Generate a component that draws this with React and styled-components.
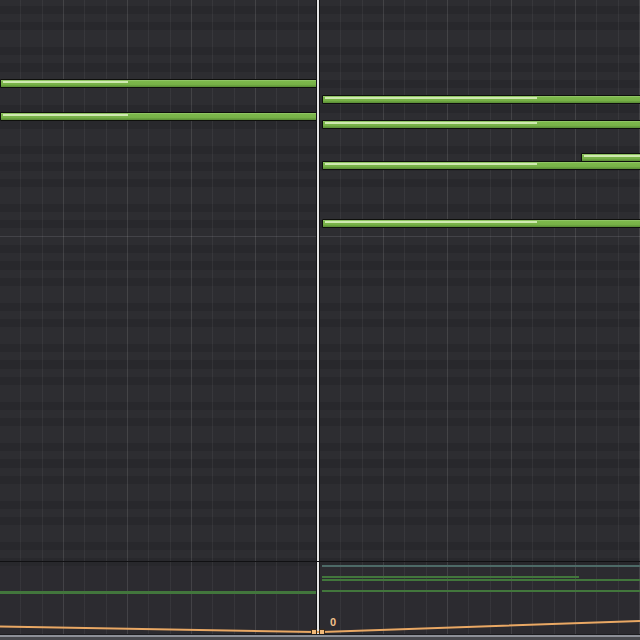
import React from 'react'
import styled, { createGlobalStyle } from 'styled-components'

const ROW_H = 8.25
const ROW_OFFSET = 5.5
const PLAYHEAD_X = 317
const MARKER_ROW = 27

const GlobalStyle = createGlobalStyle`
  html, body {
    margin: 0;
    padding: 0;
    background: #2a2a2e;
    overflow: hidden;
  }
  body {
    font-family: "Liberation Sans", Arial, sans-serif;
  }
`

const BLACK_KEYS = [0, 2, 5, 7, 9]

const notes = [
  { row: 9, x: 0, w: 318, vel: 128 },
  { row: 13, x: 0, w: 318, vel: 128 },
  { row: 11, x: 322, w: 330, vel: 215 },
  { row: 14, x: 322, w: 330, vel: 215 },
  { row: 19, x: 322, w: 330, vel: 215 },
  { row: 26, x: 322, w: 330, vel: 215 },
  { row: 18, x: 581, w: 70, vel: 59 },
]

const velocityLines = [
  { x: 0, w: 316, y: 29, h: 3, tone: 'green' },
  { x: 322, w: 318, y: 3, h: 2, tone: 'grey' },
  { x: 322, w: 257, y: 14, h: 2, tone: 'green' },
  { x: 322, w: 318, y: 17, h: 2, tone: 'green' },
  { x: 322, w: 318, y: 28, h: 2, tone: 'green' },
]

export default function App() {
  const rows = []
  for (let k = -1; k < 68; k++) {
    const m = ((k % 12) + 12) % 12
    rows.push({ k, black: BLACK_KEYS.includes(m), marker: k === MARKER_ROW })
  }

  return (
    <Editor>
      <GlobalStyle />
      <Roll>
        <KeyRows>
          {rows.map(r => (
            <KeyRow key={r.k} $black={r.black} $marker={r.marker} />
          ))}
        </KeyRows>
        <GridLines />
        {notes.map((n, i) => (
          <Note
            key={i}
            style={{ left: n.x, top: Math.round(ROW_OFFSET + n.row * ROW_H - 1), width: n.w }}
          >
            <VelocityMark style={{ width: n.vel - 3 }} />
          </Note>
        ))}
        <Playhead />
      </Roll>
      <Divider />
      <Lane>
        <GridLines />
        {velocityLines.map((v, i) => (
          <VelLine
            key={i}
            $tone={v.tone}
            style={{ left: v.x, top: v.y, width: v.w, height: v.h }}
          />
        ))}
        <Automation width="640" height="72" viewBox="0 0 640 72">
          <polyline
            points="0,64.5 314,70 322,70 640,59"
            fill="none"
            stroke="#e9a864"
            strokeWidth="2"
          />
          <rect x="311.5" y="67.5" width="5" height="5" fill="#f0b878" stroke="#3a2a1a" strokeWidth="1" />
          <rect x="319.5" y="67.5" width="5" height="5" fill="#f0b878" stroke="#3a2a1a" strokeWidth="1" />
        </Automation>
        <ValueLabel>0</ValueLabel>
        <Playhead />
      </Lane>
      <StatusStrip />
    </Editor>
  )
}

const Editor = styled.div`
  width: 640px;
  height: 640px;
  display: flex;
  flex-direction: column;
  overflow: hidden;
  background: #2a2a2e;
`

const Roll = styled.div`
  position: relative;
  height: 561px;
  flex: none;
  overflow: hidden;
`

const KeyRows = styled.div`
  display: flex;
  flex-direction: column;
  margin-top: ${ROW_OFFSET - ROW_H}px;
`

const KeyRow = styled.div`
  height: ${ROW_H}px;
  flex: none;
  background: ${p => (p.$black ? '#28282c' : '#2d2d31')};
  box-shadow: ${p => (p.$marker ? 'inset 0 -1px 0 #434348' : 'none')};
`

const GridLines = styled.div`
  position: absolute;
  inset: 0;
  pointer-events: none;
  background-image:
    repeating-linear-gradient(
      to right,
      transparent 0,
      transparent 63px,
      rgba(255, 255, 255, 0.06) 63px,
      rgba(255, 255, 255, 0.06) 64px
    ),
    repeating-linear-gradient(
      to right,
      transparent 0,
      transparent 20.33px,
      rgba(255, 255, 255, 0.05) 20.33px,
      rgba(255, 255, 255, 0.05) 21.33px
    );
`

const Note = styled.div`
  position: absolute;
  height: 9px;
  box-sizing: border-box;
  border: 1px solid #0e0f0c;
  border-radius: 1px;
  background: linear-gradient(
    to bottom,
    #8fc463 0,
    #8fc463 1px,
    #7db94c 1px,
    #76b046 5px,
    #5f9339 6px
  );
`

const VelocityMark = styled.div`
  position: absolute;
  left: 2px;
  top: 1px;
  height: 2px;
  background: #cfe9b0;
`

const Playhead = styled.div`
  position: absolute;
  top: 0;
  bottom: 0;
  left: ${PLAYHEAD_X - 1}px;
  width: 2px;
  background: #e4e4e4;
  border-left: 1px solid #151517;
  border-right: 1px solid #151517;
  z-index: 3;
`

const Divider = styled.div`
  height: 1px;
  flex: none;
  background: #101012;
`

const Lane = styled.div`
  position: relative;
  height: 72px;
  flex: none;
  background: linear-gradient(to bottom, #28282c 0, #28282c 4px, #2c2b30 4px);
`

const VelLine = styled.div`
  position: absolute;
  background: ${p => (p.$tone === 'grey' ? '#4d6a67' : '#42763c')};
`

const Automation = styled.svg`
  position: absolute;
  left: 0;
  top: 0;
  z-index: 4;
`

const ValueLabel = styled.span`
  position: absolute;
  left: 330px;
  top: 55px;
  font-size: 11px;
  line-height: 11px;
  font-weight: bold;
  color: #f2c08a;
  z-index: 5;
`

const StatusStrip = styled.div`
  flex: 1;
  background: linear-gradient(to bottom, #1c1c1f 0, #1c1c1f 1px, #8d9098 1px, #8d9098 3px, #48494e 3px);
`
